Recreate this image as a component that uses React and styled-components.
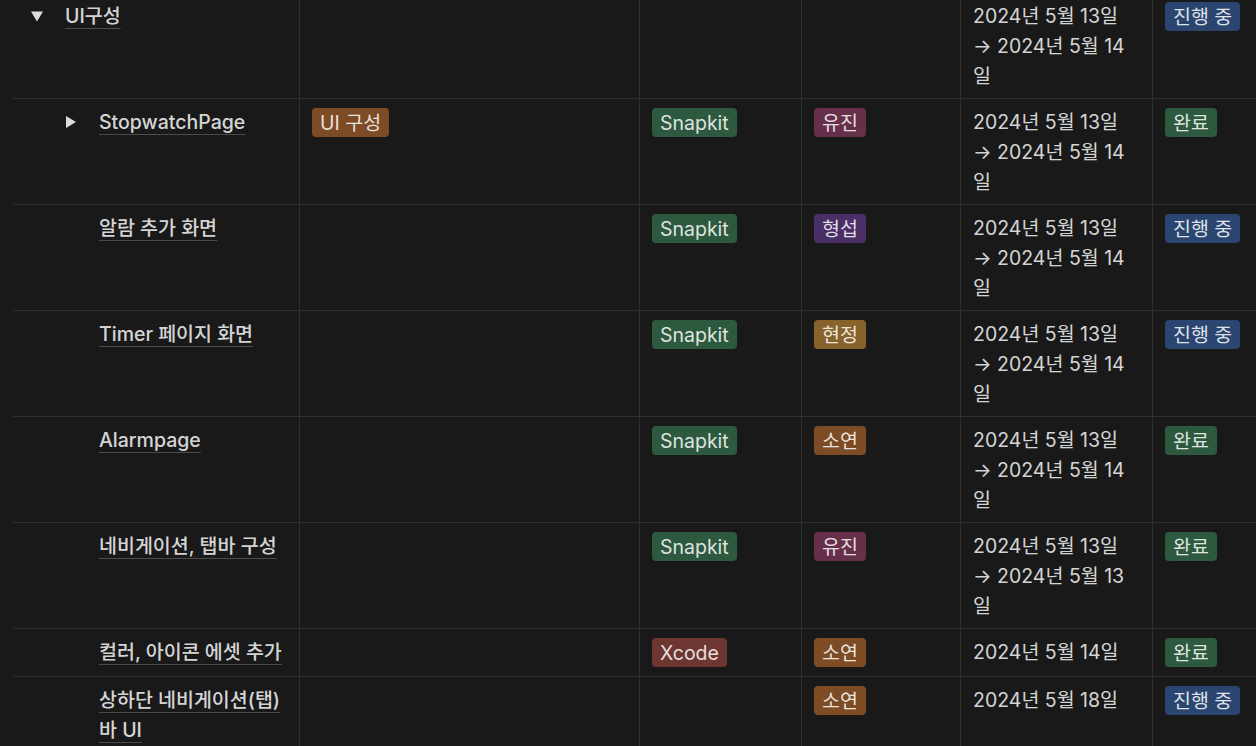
import styled, { createGlobalStyle } from "styled-components";

const GlobalStyle = createGlobalStyle`
  html, body {
    margin: 0;
    padding: 0;
    background: #191919;
    overflow: hidden;
  }
  body {
    font-family: Inter, "Noto Sans CJK KR", sans-serif;
    color: rgba(255, 255, 255, 0.81);
  }
`;

const Table = styled.div`
  margin: -7px 0 0 13px;
  font-size: 19.5px;
  line-height: 30px;
`;

const Row = styled.div`
  display: grid;
  grid-template-columns: 286px 340px 162px 159px 192px 1fr;
  border-bottom: 1px solid #2f2f2f;
`;

const Cell = styled.div`
  padding: 8px 12px 7px;
  min-height: 32px;
  border-left: ${(p) => (p.$first ? "none" : "1px solid #2f2f2f")};
`;

const TitleCell = styled(Cell)`
  display: flex;
  align-items: flex-start;
  padding-left: ${(p) => 12 + p.$depth * 34}px;
`;

const Toggle = styled.span`
  flex: 0 0 24px;
  height: 30px;
  display: flex;
  align-items: center;
  justify-content: center;
  margin-right: 16px;
  color: rgba(255, 255, 255, 0.85);
`;

const Title = styled.span`
  font-weight: 500;
  color: rgba(255, 255, 255, 0.84);
  text-decoration: underline;
  text-decoration-color: rgba(255, 255, 255, 0.22);
  text-decoration-thickness: 1px;
  text-underline-offset: 5px;
`;

const tagColors = {
  orange: "#7d4c24",
  yellow: "#87632b",
  green: "#2d5a3f",
  pink: "#67304a",
  purple: "#4a2f67",
  blue: "#2a4570",
  red: "#6e3630",
};

const Tag = styled.span`
  display: inline-flex;
  align-items: center;
  height: 29px;
  margin-top: 1px;
  padding: 0 8px;
  border-radius: 4px;
  background: ${(p) => tagColors[p.$color]};
  color: rgba(255, 255, 255, 0.85);
  white-space: nowrap;
  vertical-align: top;
`;

const DateText = styled.div`
  color: rgba(255, 255, 255, 0.84);
`;

function Triangle({ open }) {
  return (
    <svg width="12" height="12" viewBox="0 0 12 12">
      {open ? <polygon points="0,1.5 12,1.5 6,11.5" fill="currentColor" /> : <polygon points="1,0 11,6 1,12" fill="currentColor" />}
    </svg>
  );
}

const rows = [
  { title: "UI구성", depth: 0, toggle: "open", date: ["2024년 5월 13일", "→ 2024년 5월 14", "일"], status: "진행 중" },
  { title: "StopwatchPage", depth: 1, toggle: "closed", category: "UI 구성", tool: "Snapkit", owner: ["유진", "pink"], date: ["2024년 5월 13일", "→ 2024년 5월 14", "일"], status: "완료" },
  { title: "알람 추가 화면", depth: 1, tool: "Snapkit", owner: ["형섭", "purple"], date: ["2024년 5월 13일", "→ 2024년 5월 14", "일"], status: "진행 중" },
  { title: "Timer 페이지 화면", depth: 1, tool: "Snapkit", owner: ["현정", "yellow"], date: ["2024년 5월 13일", "→ 2024년 5월 14", "일"], status: "진행 중" },
  { title: "Alarmpage", depth: 1, tool: "Snapkit", owner: ["소연", "orange"], date: ["2024년 5월 13일", "→ 2024년 5월 14", "일"], status: "완료" },
  { title: "네비게이션, 탭바 구성", depth: 1, tool: "Snapkit", owner: ["유진", "pink"], date: ["2024년 5월 13일", "→ 2024년 5월 13", "일"], status: "완료" },
  { title: "컬러, 아이콘 에셋 추가", depth: 1, tool: "Xcode", owner: ["소연", "orange"], date: ["2024년 5월 14일"], status: "완료" },
  { title: ["상하단 네비게이션(탭)", "바 UI"], depth: 1, owner: ["소연", "orange"], date: ["2024년 5월 18일"], status: "진행 중" },
];

const toolColor = { Snapkit: "green", Xcode: "red" };
const statusColor = { "진행 중": "blue", 완료: "green" };

export default function App() {
  return (
    <>
      <GlobalStyle />
      <Table>
        {rows.map((row, i) => (
          <Row key={i}>
            <TitleCell $first $depth={row.depth}>
              {row.toggle ? (
                <Toggle>
                  <Triangle open={row.toggle === "open"} />
                </Toggle>
              ) : (
                <Toggle />
              )}
              <div>
                {[].concat(row.title).map((line, j) => (
                  <div key={j}>
                    <Title>{line}</Title>
                  </div>
                ))}
              </div>
            </TitleCell>
            <Cell>{row.category && <Tag $color="orange">{row.category}</Tag>}</Cell>
            <Cell>{row.tool && <Tag $color={toolColor[row.tool]}>{row.tool}</Tag>}</Cell>
            <Cell>{row.owner && <Tag $color={row.owner[1]}>{row.owner[0]}</Tag>}</Cell>
            <Cell>
              {row.date.map((line, j) => (
                <DateText key={j}>{line}</DateText>
              ))}
            </Cell>
            <Cell>
              <Tag $color={statusColor[row.status]}>{row.status}</Tag>
            </Cell>
          </Row>
        ))}
      </Table>
    </>
  );
}
